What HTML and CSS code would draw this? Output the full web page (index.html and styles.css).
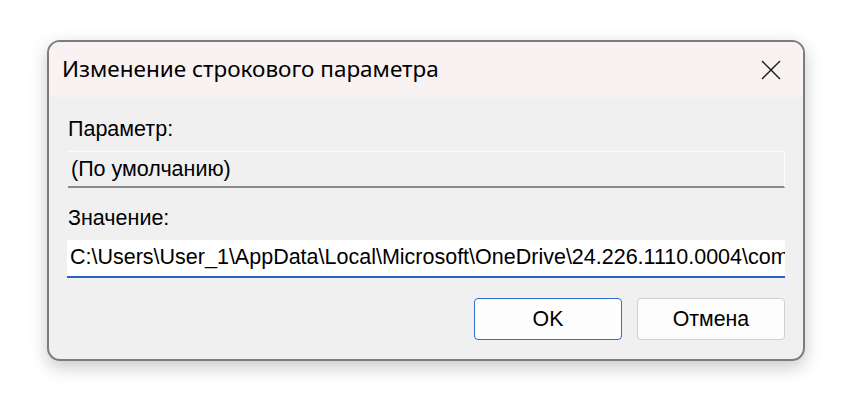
FILE: index.html
```html
<!DOCTYPE html>
<html lang="ru">
<head>
<meta charset="utf-8">
<link rel="stylesheet" href="styles.css">
</head>
<body>
<div class="dialog">
  <div class="titlebar">
    <span class="title">Изменение строкового параметра</span>
    <span class="close"><svg width="20" height="20" viewBox="0 0 20 20"><path d="M1 1L19 19M19 1L1 19" stroke="#1a1a1a" stroke-width="1.4" fill="none"/></svg></span>
  </div>
  <div class="content">
    <div class="label">Параметр:</div>
    <div class="field readonly">(По умолчанию)</div>
    <div class="label second">Значение:</div>
    <div class="field edit">C:\Users\User_1\AppData\Local\Microsoft\OneDrive\24.226.1110.0004\com</div>
    <div class="buttons">
      <div class="btn primary">OK</div>
      <div class="btn">Отмена</div>
    </div>
  </div>
</div>
</body>
</html>
```
FILE: styles.css
```css
html, body {
  margin: 0;
  padding: 0;
  background: #ffffff;
  width: 852px;
  height: 416px;
  overflow: hidden;
}
body {
  padding: 40px 0 0 47px;
  box-sizing: border-box;
  font-family: "Liberation Sans", Arial, sans-serif;
  color: #000;
}
.dialog {
  width: 758px;
  height: 321px;
  box-sizing: border-box;
  border: 2px solid #7c7c7c;
  border-radius: 13px;
  background: #f0f0f0;
  overflow: hidden;
  box-shadow: 0 6px 18px rgba(0,0,0,0.22);
}
.titlebar {
  height: 55px;
  background: #f8f2f2;
  display: flex;
  align-items: center;
  justify-content: space-between;
  padding: 0 22px 0 13px;
}
.title {
  font-family: "Noto Sans", "Open Sans", sans-serif;
  font-size: 22.5px;
  color: #000;
  padding-bottom: 2px;
}
.close {
  display: flex;
  width: 20px;
  height: 20px;
}
.content {
  padding: 20px 18px 0 18px;
}
.label {
  font-size: 21.5px;
  height: 24px;
  line-height: 24px;
  padding-left: 1px;
}
.label.second {
  margin-top: 18px;
}
.field {
  margin-top: 10px;
  height: 37px;
  box-sizing: border-box;
  font-size: 21.5px;
  line-height: 35px;
  padding-left: 3px;
  white-space: nowrap;
  overflow: hidden;
}
.field.readonly {
  margin-left: 1px;
  border-top: 1px solid #fbfbfb;
  border-right: 1px solid #fbfbfb;
  border-bottom: 2px solid #8a8a8a;
  background: #f0f0f0;
}
.field.edit {
  background: #ffffff;
  border-bottom: 2px solid #2a62c4;
  height: 38px;
}
.buttons {
  display: flex;
  justify-content: flex-end;
  gap: 15px;
  margin-top: 20px;
}
.btn {
  width: 148px;
  height: 42px;
  box-sizing: border-box;
  border: 1px solid #d0d0d0;
  border-radius: 4px;
  background: #fdfdfd;
  font-size: 21.3px;
  display: flex;
  align-items: center;
  justify-content: center;
}
.btn.primary {
  border: 1.5px solid #2f72cf;
}
```
